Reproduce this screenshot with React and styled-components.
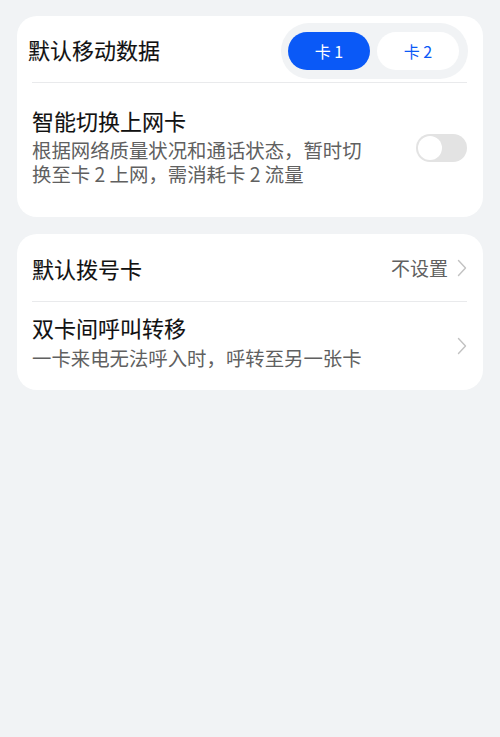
import React from "react";
import styled, { createGlobalStyle } from "styled-components";

const GlobalStyle = createGlobalStyle`
  html, body {
    margin: 0;
    padding: 0;
    background: #f1f3f5;
    font-family: "Noto Sans CJK SC", "Noto Sans", sans-serif;
  }
`;

// PAGE //

const Page = styled.div`
  width: 500px;
  min-height: 737px;
  background: #f1f3f5;
  padding: 16px 17px;
  box-sizing: border-box;
  display: flex;
  flex-direction: column;
  gap: 17px;
`;

const Card = styled.div`
  background: #ffffff;
  border-radius: 20px;
  display: flex;
  flex-direction: column;
`;

const Row = styled.div`
  display: flex;
  align-items: center;
  justify-content: space-between;
  height: ${(p) => p.h}px;
  padding: ${(p) => p.pad || "0 16px 0 15px"};
  box-sizing: border-box;
`;

const Divider = styled.div`
  height: 1px;
  background: #e9eaec;
  margin: 0 16px 0 15px;
`;

const TextCol = styled.div`
  display: flex;
  flex-direction: column;
  align-self: flex-start;
  padding-top: ${(p) => p.pt || 0}px;
`;

const Title = styled.div`
  font-size: 22px;
  line-height: 30px;
  color: #111111;
  -webkit-text-stroke: 0.12px #111111;
`;

const Sub = styled.div`
  font-size: 19.4px;
  line-height: 24px;
  color: #606060;
  margin-top: ${(p) => p.mt || 0}px;
`;

// SEGMENTED //

const Segmented = styled.div`
  display: flex;
  gap: 7px;
  padding: 9px 9px 9px 7px;
  margin-top: 4px;
  background: #f1f3f5;
  border-radius: 30px;
`;

const Pill = styled.div`
  width: 82px;
  height: 38px;
  border-radius: 19px;
  display: flex;
  align-items: center;
  justify-content: center;
  font-size: 16px;
  background: ${(p) => (p.active ? "#0a59f7" : "#ffffff")};
  color: ${(p) => (p.active ? "#ffffff" : "#0a59f7")};
`;

// TOGGLE //

const Toggle = styled.div`
  width: 51px;
  height: 28px;
  border-radius: 14px;
  background: #e3e3e3;
  padding: 2px;
  box-sizing: border-box;
  display: flex;
  align-items: center;
  flex-shrink: 0;
  margin-bottom: 4px;
`;

const Knob = styled.div`
  width: 24px;
  height: 24px;
  border-radius: 50%;
  background: #ffffff;
`;

const Right = styled.div`
  display: flex;
  align-items: center;
  gap: 9px;
  font-size: 19px;
  color: #606060;
`;

const Chevron = () => (
  <svg width="10" height="18" viewBox="0 0 10 18">
    <path d="M1.5 1.5 L8.5 9 L1.5 16.5" fill="none" stroke="#c2c2c2" strokeWidth="1.4" strokeLinecap="round" strokeLinejoin="round" />
  </svg>
);

const App = () => {
  return (
    <>
      <GlobalStyle />
      <Page>
        <Card>
          <Row h={66} pad="0 15px 0 11px">
            <Title>默认移动数据</Title>
            <Segmented>
              <Pill active>卡 1</Pill>
              <Pill>卡 2</Pill>
            </Segmented>
          </Row>
          <Divider />
          <Row h={134}>
            <TextCol pt={22}>
              <Title>智能切换上网卡</Title>
              <Sub mt={3}>根据网络质量状况和通话状态，暂时切</Sub>
              <Sub>换至卡 2 上网，需消耗卡 2 流量</Sub>
            </TextCol>
            <Toggle>
              <Knob />
            </Toggle>
          </Row>
        </Card>
        <Card>
          <Row h={67}>
            <Title>默认拨号卡</Title>
            <Right>
              不设置
              <Chevron />
            </Right>
          </Row>
          <Divider />
          <Row h={88}>
            <TextCol pt={10}>
              <Title>双卡间呼叫转移</Title>
              <Sub mt={4}>一卡来电无法呼入时，呼转至另一张卡</Sub>
            </TextCol>
            <Chevron />
          </Row>
        </Card>
      </Page>
    </>
  );
};

export default App;
